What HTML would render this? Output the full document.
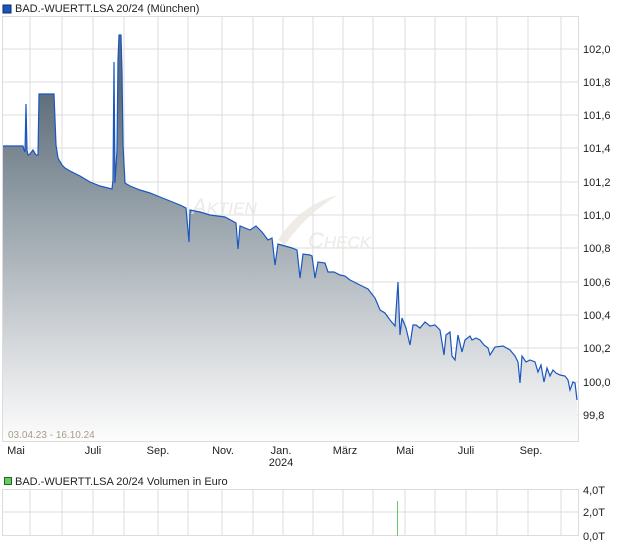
<!DOCTYPE html>
<html><head><meta charset="utf-8"><style>
body{margin:0;background:#fff;width:620px;height:546px;overflow:hidden;font-family:"Liberation Sans",sans-serif}
svg text{font-family:"Liberation Sans",sans-serif}
</style></head><body>
<svg width="620" height="546" viewBox="0 0 620 546" xmlns="http://www.w3.org/2000/svg" xmlns:xlink="http://www.w3.org/1999/xlink">
<defs>
<linearGradient id="g" gradientUnits="userSpaceOnUse" x1="0" y1="90" x2="0" y2="442">
<stop offset="0" stop-color="#5d6d7a"/><stop offset="0.35" stop-color="#97a2aa"/><stop offset="0.75" stop-color="#d9dcdf"/><stop offset="1" stop-color="#fdfdfd"/></linearGradient>
<path id="p" d="M3 146L23 146L24 150L25 152L26 104L27 150L28 155L30 154L33 150L36 155L38 155L39 94L54 94L56 145L58 158L62 165L65 168L70 171L80 176L90 182L100 186L112 189L113 180L114 62L115 183L117 150L118 60L119 35L121 35L122 72L123 145L125 183L130 186L140 190L150 193L160 197L170 201L180 205L186 208L189 242L190 210L200 212L210 215L225 217L236 223L238 249L240 226L250 230L256 226L262 232L268 240L272 238L275 265L278 244L285 246L292 248L297 250L300 278L303 254L310 255L312 256L315 278L318 262L325 263L328 272L334 272L340 275L345 276L350 280L360 285L368 289L375 298L378 305L380 310L385 313L390 320L395 326L398 282L400 335L402 318L406 328L410 345L413 325L416 325L420 328L425 322L430 326L435 325L440 330L444 355L446 335L450 332L452 356L455 360L458 335L462 352L465 340L470 336L472 340L476 338L480 340L484 345L488 348L490 355L495 347L503 346L510 350L515 356L518 362L520 383L522 356L526 362L530 360L535 362L538 372L541 365L544 382L547 368L550 376L553 370L556 373L560 375L565 376L568 380L570 390L573 382L575 383L577 400"/>
</defs>
<rect x="3" y="5" width="8" height="8" fill="#1a56c0" stroke="#0b2a66" stroke-width="1"/>
<text x="15" y="12" font-size="11" fill="#222">BAD.-WUERTT.LSA 20/24 (München)</text>
<g stroke="#dcdcdc" stroke-width="1" fill="none">
<rect x="2.5" y="16.5" width="576" height="425"/>
<path d="M30 16V442M62 16V442M93 16V442M124 16V442M158 16V442M188 16V442M222 16V442M253 16V442M283 16V442M313 16V442M343 16V442M373 16V442M405 16V442M435 16V442M466 16V442M497 16V442M528 16V442M561 16V442"/>
<path d="M2 49H578M2 82H578M2 115H578M2 148H578M2 182H578M2 215H578M2 248H578M2 282H578M2 315H578M2 348H578M2 382H578M2 415H578"/>
</g>
<path d="M3 146L23 146L24 150L25 152L26 104L27 150L28 155L30 154L33 150L36 155L38 155L39 94L54 94L56 145L58 158L62 165L65 168L70 171L80 176L90 182L100 186L112 189L113 180L114 62L115 183L117 150L118 60L119 35L121 35L122 72L123 145L125 183L130 186L140 190L150 193L160 197L170 201L180 205L186 208L189 242L190 210L200 212L210 215L225 217L236 223L238 249L240 226L250 230L256 226L262 232L268 240L272 238L275 265L278 244L285 246L292 248L297 250L300 278L303 254L310 255L312 256L315 278L318 262L325 263L328 272L334 272L340 275L345 276L350 280L360 285L368 289L375 298L378 305L380 310L385 313L390 320L395 326L398 282L400 335L402 318L406 328L410 345L413 325L416 325L420 328L425 322L430 326L435 325L440 330L444 355L446 335L450 332L452 356L455 360L458 335L462 352L465 340L470 336L472 340L476 338L480 340L484 345L488 348L490 355L495 347L503 346L510 350L515 356L518 362L520 383L522 356L526 362L530 360L535 362L538 372L541 365L544 382L547 368L550 376L553 370L556 373L560 375L565 376L568 380L570 390L573 382L575 383L577 400L578 441L3 441Z" fill="url(#g)"/>
<g font-style="italic" font-size="22" fill="#e8e4de" fill-opacity="0.8"><text x="192" y="214">A<tspan font-size="17">KTIEN</tspan></text><text x="308" y="248">C<tspan font-size="17">HECK</tspan></text></g>
<path d="M278 240 Q300 205 338 195 Q305 215 285 245Z" fill="#ebe7e1" fill-opacity="0.8"/>
<use href="#p" xlink:href="#p" fill="none" stroke="#1a56c0" stroke-width="1.2"/>
<g font-size="11" fill="#222">
<text x="583" y="53">102,0</text><text x="583" y="86">101,8</text><text x="583" y="119">101,6</text><text x="583" y="152">101,4</text><text x="583" y="186">101,2</text><text x="583" y="219">101,0</text><text x="583" y="252">100,8</text><text x="583" y="286">100,6</text><text x="583" y="319">100,4</text><text x="583" y="352">100,2</text><text x="583" y="386">100,0</text><text x="583" y="419">99,8</text>
</g>
<text x="8" y="438" font-size="10" fill="#a89c88">03.04.23 - 16.10.24</text>
<g font-size="11" fill="#222" text-anchor="middle">
<text x="16" y="454">Mai</text><text x="93" y="454">Juli</text><text x="158" y="454">Sep.</text><text x="223" y="454">Nov.</text><text x="281" y="454">Jan.</text><text x="281" y="466">2024</text><text x="345" y="454">März</text><text x="405" y="454">Mai</text><text x="466" y="454">Juli</text><text x="531" y="454">Sep.</text>
</g>
<rect x="4.5" y="477.5" width="7" height="7" fill="#66cc66" stroke="#226622"/>
<text x="15" y="485" font-size="11" fill="#222">BAD.-WUERTT.LSA 20/24 Volumen in Euro</text>
<g stroke="#dcdcdc" fill="none">
<rect x="2.5" y="489.5" width="576" height="46"/>
<path d="M2 512H578M30 489V536M62 489V536M93 489V536M124 489V536M158 489V536M188 489V536M222 489V536M253 489V536M283 489V536M313 489V536M343 489V536M373 489V536M405 489V536M435 489V536M466 489V536M497 489V536M528 489V536M561 489V536"/>
</g>
<path d="M397.5 501V536" stroke="#66cc66"/>
<g font-size="11" fill="#222"><text x="583" y="494">4,0T</text><text x="583" y="516">2,0T</text><text x="583" y="540">0,0T</text></g>
</svg>
</body></html>
